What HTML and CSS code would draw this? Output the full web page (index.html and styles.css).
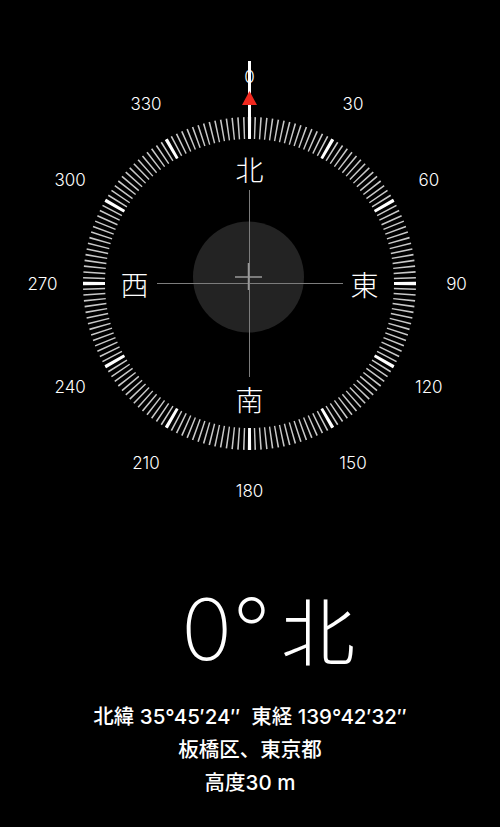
FILE: index.html
```html
<!DOCTYPE html>
<html lang="ja">
<head>
    <meta charset="UTF-8">
    <meta name="viewport" content="width=device-width, initial-scale=1.0">
    <title>コンパス</title>
    <link rel="stylesheet" href="styles.css">
</head>
<body>

<div class="compass">
    <svg class="dial" width="500" height="520" viewBox="0 0 500 520">
        <!-- tick ring: one dash every 2 degrees, heavy dash every 30 -->
        <circle class="ticks-minor" cx="249.5" cy="283.5" r="155.5" pathLength="360"/>
        <circle class="ticks-major" cx="249.5" cy="283.5" r="155.5" pathLength="360"/>

        <!-- level bubble -->
        <circle class="bubble" cx="248.5" cy="277" r="55.5"/>
        <line class="cross" x1="157" y1="283.5" x2="343" y2="283.5"/>
        <line class="cross" x1="249.5" y1="190" x2="249.5" y2="377"/>
        <line class="bubble-cross" x1="235" y1="277" x2="262" y2="277"/>
        <line class="bubble-cross" x1="248.5" y1="263" x2="248.5" y2="290"/>

        <text class="deg" x="249.5" y="76.5">0</text>
        <text class="deg" x="353" y="104">30</text>
        <text class="deg" x="428.8" y="180">60</text>
        <text class="deg" x="456.5" y="283.5">90</text>
        <text class="deg" x="428.8" y="387">120</text>
        <text class="deg" x="353" y="462.8">150</text>
        <text class="deg" x="249.5" y="490.5">180</text>
        <text class="deg" x="146" y="462.8">210</text>
        <text class="deg" x="70.2" y="387">240</text>
        <text class="deg" x="42.5" y="283.5">270</text>
        <text class="deg" x="70.2" y="180">300</text>
        <text class="deg" x="146" y="104">330</text>

        <text class="cardinal" x="249.5" y="168.5">北</text>
        <text class="cardinal" x="364.5" y="283.5">東</text>
        <text class="cardinal" x="249.5" y="398.5">南</text>
        <text class="cardinal" x="134.5" y="283.5">西</text>

        <!-- heading marker -->
        <rect class="needle" x="248" y="61" width="3" height="77"/>
        <polygon class="pointer" points="249.5,91 242,105 257,105"/>
    </svg>
</div>

<div class="heading">
    <span class="heading-deg">0°</span>
    <span class="heading-dir">北</span>
</div>

<div class="location">
    <p>北緯 35°45′24″&nbsp;&nbsp;東経 139°42′32″</p>
    <p>板橋区、東京都</p>
    <p>高度30 m</p>
</div>

</body>
</html>
```

FILE: styles.css
```css
* {
    margin: 0;
    padding: 0;
    box-sizing: border-box;
}

body {
    background-color: #000;
    color: #fff;
    width: 500px;
    height: 827px;
    overflow: hidden;
    font-family: Inter, "Noto Sans CJK JP", sans-serif;
}

.compass {
    height: 520px;
}

.dial {
    display: block;
}

.ticks-minor {
    fill: none;
    stroke: #c8c8c8;
    stroke-width: 22;
    stroke-dasharray: 0.55 1.45;
    stroke-dashoffset: 0.275;
}

.ticks-major {
    fill: none;
    stroke: #fff;
    stroke-width: 22;
    stroke-dasharray: 1.15 28.85;
    stroke-dashoffset: 0.575;
}

.bubble {
    fill: #232323;
}

.cross {
    stroke: #7c7c7c;
    stroke-width: 1;
}

.bubble-cross {
    stroke: #9a9a9a;
    stroke-width: 1.5;
}

.deg {
    fill: #fff;
    font-family: Inter, sans-serif;
    font-size: 17px;
    font-weight: 300;
    text-anchor: middle;
    dominant-baseline: central;
}

.cardinal {
    fill: #fff;
    font-family: "Noto Sans CJK JP", sans-serif;
    font-size: 28px;
    font-weight: 300;
    text-anchor: middle;
    dominant-baseline: central;
}

.needle {
    fill: #fff;
}

.pointer {
    fill: #f0281e;
}

.heading {
    display: flex;
    justify-content: center;
    align-items: baseline;
    gap: 10px;
    height: 170px;
    padding-top: 67px;
    padding-left: 36px;
    font-weight: 200;
}

.heading-deg {
    font-family: Inter, sans-serif;
    font-size: 85px;
    line-height: 1;
}

.heading-dir {
    font-family: "Noto Sans CJK JP", sans-serif;
    font-size: 74px;
    line-height: 1;
}

.location {
    text-align: center;
    font-size: 20.5px;
    font-weight: 500;
    line-height: 33px;
    margin-top: 10px;
}
```
